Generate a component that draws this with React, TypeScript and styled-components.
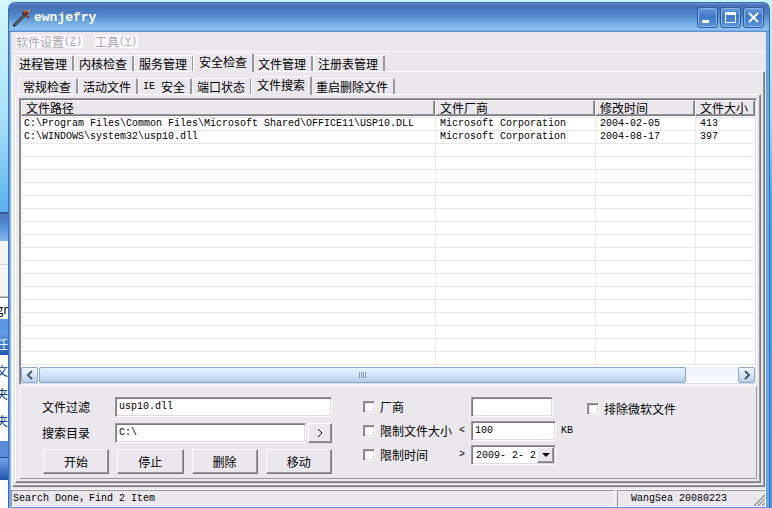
import React from 'react';
import styled, { createGlobalStyle, css } from 'styled-components';

const FACE = '#ebe8ed';
const SHADE = '#98979d';
const DARK = '#7a797f';
const CJK = "'Noto Sans CJK SC', sans-serif";
const MONO = "'Liberation Mono', 'Noto Sans CJK SC', monospace";

const GlobalStyle = createGlobalStyle`
  * { box-sizing: border-box; }
  body { margin: 0; font: 12px/14px ${CJK}; color: #000; }
  button, input, select { font: inherit; color: inherit; margin: 0; padding: 0; border-radius: 0; }
`;

const sunken = css`
  border: 1px solid;
  border-color: ${SHADE} #fff #fff ${SHADE};
  box-shadow: inset 1px 1px 0 ${DARK}, inset -1px -1px 0 #dedce2;
`;
const raised = css`
  background: ${FACE};
  border: 1px solid;
  border-color: #fff ${DARK} ${DARK} #fff;
  box-shadow: inset -1px -1px 0 ${SHADE};
`;

const Desktop = styled.div`
  display: flex;
  min-height: 100vh;
  padding: 2px 2px 0 0;
  background: linear-gradient(#c9f4fc, #9edcfa 120px, #4fa0ea 200px, #4f90e0);
`;
const Backdrop = styled.div`
  width: 8px;
  margin-top: -2px;
  display: flex;
  flex-direction: column;
  overflow: hidden;
`;
const Strip = styled.div<{ $h: number; $bg: string }>`
  height: ${p => p.$h}px;
  flex: none;
  background: ${p => p.$bg};
`;
const Sliver = styled.div<{ $h: number; $bg: string; $color: string }>`
  height: ${p => p.$h}px;
  flex: none;
  display: flex;
  align-items: center;
  justify-content: flex-end;
  white-space: nowrap;
  background: ${p => p.$bg};
  color: ${p => p.$color};
`;

const Frame = styled.main`
  flex: 1;
  min-width: 0;
  display: flex;
  flex-direction: column;
  border: 1px solid #3c68ac;
  border-bottom: 0;
  border-radius: 7px 7px 0 0;
  background: linear-gradient(90deg, #5a9be0, #86c2f2 2px, #5a9be0 3px, #5a9be0 calc(100% - 3px), #6fb2ee 100%);
  overflow: hidden;
`;
const TitleBar = styled.header`
  height: 29px;
  flex: none;
  display: flex;
  align-items: center;
  gap: 3px;
  padding: 0 5px 0 4px;
  background: linear-gradient(#6a9ada, #4a72b6 2px, #4b7bc2 9px, #5a93d2 15px, #78b0e4 21px, #8cc2ee 27px, #5c92d4 28px);
  color: #fff;
`;
const Title = styled.h1`
  margin: 0;
  flex: 1;
  font: bold 13px/16px ${MONO};
`;
const CaptionButtons = styled.div`
  display: flex;
  gap: 2px;
`;
const CaptionButton = styled.button`
  width: 21px;
  height: 21px;
  display: grid;
  place-items: center;
  border: 1px solid #2f5a9e;
  border-radius: 3px;
  background: linear-gradient(#6a9bdc, #4078c8 45%, #5a96dc);
  box-shadow: inset 0 0 0 1px #84b4ea;
`;

const Client = styled.div`
  flex: 1;
  display: flex;
  flex-direction: column;
  margin: 0 3px 2px 2px;
  background: ${FACE};
`;
const MenuBar = styled.nav`
  height: 20px;
  display: flex;
  align-items: center;
  gap: 12px;
  padding-left: 5px;
  border-bottom: 1px solid #fff;
`;
const MenuButton = styled.button`
  display: flex;
  align-items: center;
  border: 0;
  background: #fbfafc;
  color: #aaa8ac;
  height: 13px;
  padding-right: 1px;
`;
const Latin = styled.span`
  font: 10px/14px ${MONO};
  white-space: pre;
`;
const Accel = styled(Latin)`
  & > u { text-underline-offset: 1px; }
`;

const TabStrip = styled.div<{ $inset: number; $top: number }>`
  display: flex;
  align-items: flex-end;
  height: 18px;
  margin-top: ${p => p.$top}px;
  padding-left: ${p => p.$inset}px;
`;
const TabButton = styled.button<{ $active: boolean }>`
  display: flex;
  align-items: center;
  height: ${p => (p.$active ? 19 : 16)}px;
  padding: ${p => (p.$active ? '0 5px 2px 5px' : '0 5px 0 4px')};
  margin: ${p => (p.$active ? '0 -1px -1px -1px' : '0')};
  border: 1px solid #fff;
  border-right: 2px solid ${SHADE};
  border-bottom: 0;
  border-radius: 2px 2px 0 0;
  background: ${FACE};
  white-space: nowrap;
  position: ${p => (p.$active ? 'relative' : 'static')};
`;
const Page = styled.section`
  flex: 1;
  display: flex;
  flex-direction: column;
  border: 1px solid;
  border-color: #fff ${DARK} ${DARK} #fff;
  box-shadow: inset -1px -1px 0 ${SHADE};
`;
const OuterPage = styled(Page)`
  margin: 0 1px 2px 1px;
  padding: 0 3px 3px 2px;
`;
const InnerPage = styled(Page)`
  padding: 3px 3px 3px 3px;
`;

const ListView = styled.div`
  ${sunken}
  flex: 1;
  display: flex;
  flex-direction: column;
  padding: 1px;
  background: #fff;
`;
const FileTable = styled.table`
  width: 100%;
  table-layout: fixed;
  border-collapse: separate;
  border-spacing: 0;
  margin-bottom: 2px;
`;
const Col = styled.col<{ $w?: number }>`
  ${p => p.$w && `width: ${p.$w}px;`}
`;
const HeadCell = styled.th`
  padding: 0;
  font-weight: normal;
  text-align: left;
  border-bottom: 1px solid #e8e8e8;
`;
const HeadLabel = styled.div`
  ${raised}
  height: 16px;
  padding-left: 4px;
  margin-bottom: 1px;
  line-height: 14px;
`;
const Cell = styled.td`
  height: 13px;
  padding: 0 0 0 4px;
  border-bottom: 1px solid #e8e8e8;
  font: 10px/12px ${MONO};
  white-space: pre;
  &:first-child { padding-left: 3px; }
  & + & { border-left: 1px solid #e8e8e8; }
`;

const ScrollBar = styled.div`
  height: 16px;
  margin-top: auto;
  display: flex;
  gap: 1px;
  background: linear-gradient(#edf3fd, #fafcff);
`;
const ScrollButton = styled.button`
  width: 17px;
  flex: none;
  display: grid;
  place-items: center;
  border: 1px solid #8ea8c8;
  border-radius: 2px;
  background: linear-gradient(#f4f9ff, #b9d0ee);
`;
const Track = styled.div`
  flex: 1;
  display: flex;
`;
const Thumb = styled.div`
  display: grid;
  place-items: center;
  border: 1px solid #8aa6c8;
  border-radius: 2px;
  background: linear-gradient(#e6f2ff, #d3e5fb 50%, #b2cbea);
`;

const Options = styled.form`
  display: flex;
  align-items: flex-start;
  margin: 1px 0 0;
  padding: 10px 4px 4px 22px;
  border: 1px solid;
  border-color: #fff ${SHADE} ${SHADE} #fff;
`;
const SearchBox = styled.div`
  width: 290px;
  flex: none;
  display: flex;
  flex-direction: column;
  gap: 6px;
`;
const Field = styled.div`
  display: flex;
  align-items: center;
  gap: 2px;
  height: 20px;
`;
const FieldLabel = styled.label`
  width: 71px;
`;
const TextBox = styled.input<{ $w?: number }>`
  ${sunken}
  height: 20px;
  min-width: 0;
  ${p => (p.$w ? `width: ${p.$w}px;` : 'flex: 1;')}
  padding: 0 0 2px 3px;
  background: #fff;
  font: 10px/14px ${MONO};
`;
const BrowseButton = styled.button`
  ${raised}
  width: 24px;
  height: 20px;
  display: grid;
  place-items: center;
`;
const Actions = styled.div`
  display: flex;
  gap: 8px;
  padding-left: 1px;
`;
const ActionButton = styled.button`
  ${raised}
  flex: 1;
  height: 25px;
`;

const Filters = styled.div`
  display: grid;
  grid-template-columns: 96px 12px auto auto;
  grid-auto-rows: 20px;
  row-gap: 4px;
  align-items: center;
  margin-left: 31px;
`;
const CheckLabel = styled.label`
  display: flex;
  align-items: center;
  gap: 5px;
  white-space: nowrap;
`;
const Check = styled.input`
  ${sunken}
  appearance: none;
  width: 12px;
  height: 12px;
  background: #fff;
  &:checked { background: #333; }
`;
const Unit = styled(Latin)`
  padding-left: 5px;
`;
const Exclude = styled.div`
  display: flex;
  align-items: center;
  height: 24px;
  margin-left: 14px;
`;
const DateBox = styled.div`
  ${sunken}
  position: relative;
  width: 85px;
  height: 20px;
  background: #fff;
`;
const DateSelect = styled.select`
  appearance: none;
  width: 100%;
  height: 18px;
  border: 0;
  padding-left: 4px;
  background: transparent;
  font: 10px/14px ${MONO};
`;
const DropMark = styled.span`
  ${raised}
  position: absolute;
  top: 1px;
  right: 1px;
  width: 17px;
  height: 16px;
  display: grid;
  place-items: center;
  pointer-events: none;
`;

const StatusBar = styled.footer`
  display: flex;
  gap: 2px;
  height: 18px;
  border-top: 1px solid #fff;
`;
const StatusCell = styled.div<{ $w?: number }>`
  ${p => (p.$w ? `width: ${p.$w}px;` : 'flex: 1;')}
  display: flex;
  align-items: center;
  justify-content: space-between;
  padding-left: ${p => (p.$w ? 13 : 1)}px;
  border: 1px solid;
  border-color: ${SHADE} #fff #fff ${SHADE};
`;
const Grip = styled.svg`
  align-self: flex-end;
`;

const outerTabs = ['进程管理', '内核检查', '服务管理', '安全检查', '文件管理', '注册表管理'];
const innerTabs = ['常规检查', '活动文件', 'IE 安全', '端口状态', '文件搜索', '重启删除文件'];
const files = [
  ['C:\\Program Files\\Common Files\\Microsoft Shared\\OFFICE11\\USP10.DLL', 'Microsoft Corporation', '2004-02-05', '413'],
  ['C:\\WINDOWS\\system32\\usp10.dll', 'Microsoft Corporation', '2004-08-17', '397'],
];
const blankRows = Array.from({ length: 17 }, () => ['', '', '', '']);

const SwordIcon = () => (
  <svg width="18" height="18" viewBox="0 0 18 18" fill="none">
    <path d="M0.500 17 L12 5.500" stroke="#1d2633" strokeWidth="3" />
    <path d="M1.500 16 L12 5.500" stroke="#b0aca0" strokeWidth="1" />
    <path d="M9.500 2.500 L15.500 8.500" stroke="#3b1712" strokeWidth="2" />
    <path d="M9.500 2 h2 M11 3.500 h2 M14 6 v2" stroke="#d8702c" strokeWidth="1.500" />
    <path d="M12 5.500 L16 1.500" stroke="#8e2a1c" strokeWidth="2.500" />
    <path d="M14 2 h3" stroke="#e8a048" strokeWidth="1.500" />
  </svg>
);

const Chevron = ({ d }: { d: string }) => (
  <svg width="8" height="10" viewBox="0 0 8 10" fill="none" stroke="#44586e" strokeWidth="2">
    <path d={d} />
  </svg>
);

type TabsProps = { items: string[]; active: string; inset: number; top: number; label: string };

const Tabs = ({ items, active, inset, top, label }: TabsProps) => (
  <TabStrip role="tablist" aria-label={label} $inset={inset} $top={top}>
    {items.map(t => (
      <TabButton key={t} type="button" role="tab" aria-selected={t === active} $active={t === active}>
        {t.startsWith('IE ') ? <><Latin>{'IE '}</Latin>{t.slice(3)}</> : t}
      </TabButton>
    ))}
  </TabStrip>
);

export default function App() {
  return (
    <>
      <GlobalStyle />
      <Desktop>
        <Backdrop aria-hidden="true">
          <Strip $h={212} $bg="linear-gradient(#d4f8fc, #a8e0fa 120px, #58b0ee)" />
          <Strip $h={29} $bg="linear-gradient(#2c5494 1px, #4a74ba 2px, #5590d4 50%, #84b8ee)" />
          <Strip $h={23} $bg="#f5f5f8" />
          <Strip $h={34} $bg="linear-gradient(#d5d5da 1px, #f5f5f8 1px, #f5f5f8 32px, #8a8a90 33px)" />
          <Sliver $h={21} $bg="#fff" $color="#000">gr</Sliver>
          <Strip $h={13} $bg="#5a98e6" />
          <Sliver $h={23} $bg="linear-gradient(#6a9ee8, #2858b0)" $color="#dff">任</Sliver>
          <Sliver $h={32} $bg="#fff" $color="#123a80">文</Sliver>
          <Sliver $h={14} $bg="#fff" $color="#123a80">夹</Sliver>
          <Sliver $h={40} $bg="#fff" $color="#123a80">夹</Sliver>
          <Strip $h={16} $bg="#5a8cdc" />
          <Strip $h={23} $bg="linear-gradient(#1c4a9c 1px, #6ca2ea 1px, #2452ac)" />
          <Strip $h={28} $bg="#fff" />
        </Backdrop>
        <Frame>
          <TitleBar>
            <SwordIcon />
            <Title>ewnjefry</Title>
            <CaptionButtons>
              <CaptionButton type="button" aria-label="最小化">
                <svg width="15" height="15" viewBox="0 0 15 15"><path d="M2 10h7v3H2z" fill="#fff" /></svg>
              </CaptionButton>
              <CaptionButton type="button" aria-label="最大化">
                <svg width="15" height="15" viewBox="0 0 15 15"><path d="M2 2h11v11H2z M3 5v7h9V5z" fill="#fff" fillRule="evenodd" /></svg>
              </CaptionButton>
              <CaptionButton type="button" aria-label="关闭">
                <svg width="15" height="15" viewBox="0 0 15 15"><path d="M3 3l9 9M12 3l-9 9" stroke="#fff" strokeWidth="2" /></svg>
              </CaptionButton>
            </CaptionButtons>
          </TitleBar>
          <Client>
            <MenuBar>
              <MenuButton type="button" disabled>软件设置<Accel>(<u>Z</u>)</Accel></MenuButton>
              <MenuButton type="button" disabled>工具<Accel>(<u>Y</u>)</Accel></MenuButton>
            </MenuBar>
            <Tabs items={outerTabs} active="安全检查" inset={3} top={1} label="功能" />
            <OuterPage>
              <Tabs items={innerTabs} active="文件搜索" inset={3} top={4} label="安全检查" />
              <InnerPage>
                <ListView>
                  <FileTable>
                    <colgroup><Col /><Col $w={160} /><Col $w={100} /><Col $w={60} /></colgroup>
                    <thead>
                      <tr>
                        {['文件路径', '文件厂商', '修改时间', '文件大小'].map(h => (
                          <HeadCell key={h} scope="col"><HeadLabel>{h}</HeadLabel></HeadCell>
                        ))}
                      </tr>
                    </thead>
                    <tbody>
                      {[...files, ...blankRows].map((row, i) => (
                        <tr key={i}>{row.map((c, j) => <Cell key={j}>{c}</Cell>)}</tr>
                      ))}
                    </tbody>
                  </FileTable>
                  <ScrollBar>
                    <ScrollButton type="button" aria-label="向左滚动"><Chevron d="M6 1 L2 5 L6 9" /></ScrollButton>
                    <Track>
                      <Thumb style={{ width: '92.7%' }}>
                        <svg width="8" height="6" viewBox="0 0 8 6"><path d="M0 0h1v6H0z M2 0h1v6H2z M4 0h1v6H4z M6 0h1v6H6z" fill="#8098b8" /></svg>
                      </Thumb>
                    </Track>
                    <ScrollButton type="button" aria-label="向右滚动"><Chevron d="M2 1 L6 5 L2 9" /></ScrollButton>
                  </ScrollBar>
                </ListView>
                <Options>
                  <SearchBox>
                    <Field>
                      <FieldLabel htmlFor="filter">文件过滤</FieldLabel>
                      <TextBox id="filter" defaultValue="usp10.dll" />
                    </Field>
                    <Field>
                      <FieldLabel htmlFor="folder">搜索目录</FieldLabel>
                      <TextBox id="folder" defaultValue="C:\" />
                      <BrowseButton type="button" aria-label="浏览">
                        <svg width="6" height="10" viewBox="0 0 6 10" fill="none" stroke="#000"><path d="M1 1 L5 5 L1 9" /></svg>
                      </BrowseButton>
                    </Field>
                    <Actions>
                      <ActionButton type="button">开始</ActionButton>
                      <ActionButton type="button">停止</ActionButton>
                      <ActionButton type="button">删除</ActionButton>
                      <ActionButton type="button">移动</ActionButton>
                    </Actions>
                  </SearchBox>
                  <Filters>
                    <CheckLabel><Check type="checkbox" />厂商</CheckLabel>
                    <span />
                    <TextBox $w={82} aria-label="厂商" />
                    <span />
                    <CheckLabel><Check type="checkbox" />限制文件大小</CheckLabel>
                    <Latin>&lt;</Latin>
                    <TextBox $w={85} aria-label="文件大小" defaultValue="100" />
                    <Unit>KB</Unit>
                    <CheckLabel><Check type="checkbox" />限制时间</CheckLabel>
                    <Latin>&gt;</Latin>
                    <DateBox>
                      <DateSelect aria-label="时间"><option>{'2009-\u00a02-\u00a02'}</option></DateSelect>
                      <DropMark><svg width="8" height="4" viewBox="0 0 8 4"><path d="M0 0h8L4 4z" /></svg></DropMark>
                    </DateBox>
                    <span />
                  </Filters>
                  <Exclude>
                    <CheckLabel><Check type="checkbox" />排除微软文件</CheckLabel>
                  </Exclude>
                </Options>
              </InnerPage>
            </OuterPage>
            <StatusBar>
              <StatusCell><Latin>Search Done，Find 2 Item</Latin></StatusCell>
              <StatusCell $w={149}>
                <Latin>WangSea 20080223</Latin>
                <Grip width="12" height="12" viewBox="0 0 12 12" stroke="#98969c" strokeWidth="1.500"><path d="M1 12L12 1M5 12L12 5M9 12L12 9" /></Grip>
              </StatusCell>
            </StatusBar>
          </Client>
        </Frame>
      </Desktop>
    </>
  );
}
